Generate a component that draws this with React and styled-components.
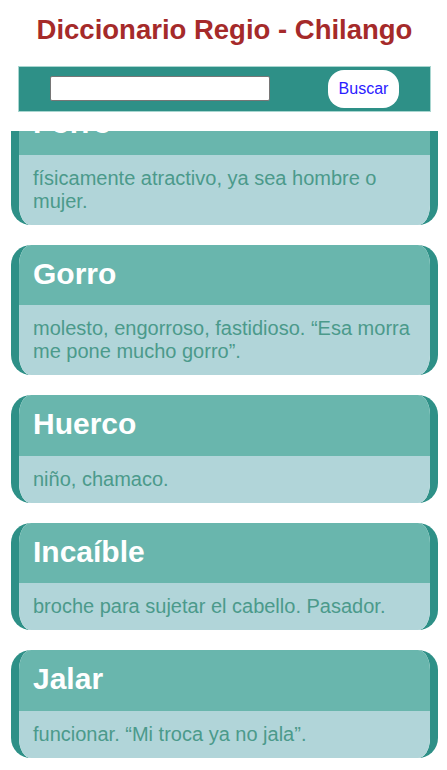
import React, { useLayoutEffect, useRef } from 'react'
import styled, { createGlobalStyle } from 'styled-components';

const palabras = [
    { word: 'Forro', def: 'físicamente atractivo, ya sea hombre o mujer.' },
    { word: 'Gorro', def: 'molesto, engorroso, fastidioso. “Esa morra me pone mucho gorro”.' },
    { word: 'Huerco', def: 'niño, chamaco.' },
    { word: 'Incaíble', def: 'broche para sujetar el cabello. Pasador.' },
    { word: 'Jalar', def: 'funcionar. “Mi troca ya no jala”.' },
];

function App() {
    const listRef = useRef(null);

    // la lista ya viene desplazada un poco hacia abajo
    useLayoutEffect(() => {
        if (listRef.current) listRef.current.scrollTop = 37;
    }, []);

    return (
        <Page>
            <GlobalStyle />
            <Header>
                <Title>Diccionario Regio - Chilango</Title>
                <SearchBar>
                    <SearchInput type="text" />
                    <SearchButton>Buscar</SearchButton>
                </SearchBar>
            </Header>
            <List ref={listRef}>
                {palabras.map((p) => (
                    <Card key={p.word}>
                        <Word>{p.word}</Word>
                        <Definition>{p.def}</Definition>
                    </Card>
                ))}
            </List>
        </Page>
    )
};

export default App;

const GlobalStyle = createGlobalStyle`
    html, body {
        margin: 0;
        padding: 0;
        background: #ffffff;
    }
    body {
        font-family: "Liberation Sans", Arial, sans-serif;
    }
`

const Page = styled.div`
    height: 100vh;
    display: flex;
    flex-direction: column;
    overflow: hidden;
`

const Header = styled.header`
    flex: none;
    background: #ffffff;
    padding: 14px 16px 19px 18px;
`

const Title = styled.h1`
    margin: 0 0 20px;
    text-align: center;
    font-size: 27.5px;
    font-weight: bold;
    color: #a52a2a;
    line-height: 32px;
`

const SearchBar = styled.div`
    height: 46px;
    box-sizing: border-box;
    background-color: #2e9087;
    border: 1px solid #a8d6d0;
    display: flex;
    align-items: center;
    justify-content: space-between;
    padding: 0 31px;
`

const SearchInput = styled.input`
    width: 220px;
    height: 25px;
    box-sizing: border-box;
    border: 1px solid #767676;
    border-radius: 2px;
    background: #ffffff;
    padding: 1px 2px;
    margin-top: -1px;
`

const SearchButton = styled.button`
    width: 71px;
    height: 38px;
    border: none;
    border-radius: 16px;
    background: #ffffff;
    color: #2a20ff;
    font-family: "Liberation Sans", Arial, sans-serif;
    font-size: 16px;
    padding: 0;
`

const List = styled.main`
    flex: 1;
    overflow: hidden;
    padding: 0 9px 0 11px;
`

const Card = styled.section`
    border-left: 8px solid #2e9087;
    border-right: 8px solid #2e9087;
    border-radius: 20px;
    overflow: hidden;
    margin-bottom: 20px;
`

const Word = styled.h2`
    margin: 0;
    height: 60.5px;
    box-sizing: border-box;
    padding: 12px 14px 0;
    background-color: #69b6ad;
    color: #ffffff;
    font-size: 30px;
    font-weight: bold;
    line-height: normal;
`

const Definition = styled.p`
    margin: 0;
    padding: 12px 14px;
    background-color: #b1d5d9;
    color: #4b9a8b;
    font-size: 20px;
    line-height: 23px;
`
